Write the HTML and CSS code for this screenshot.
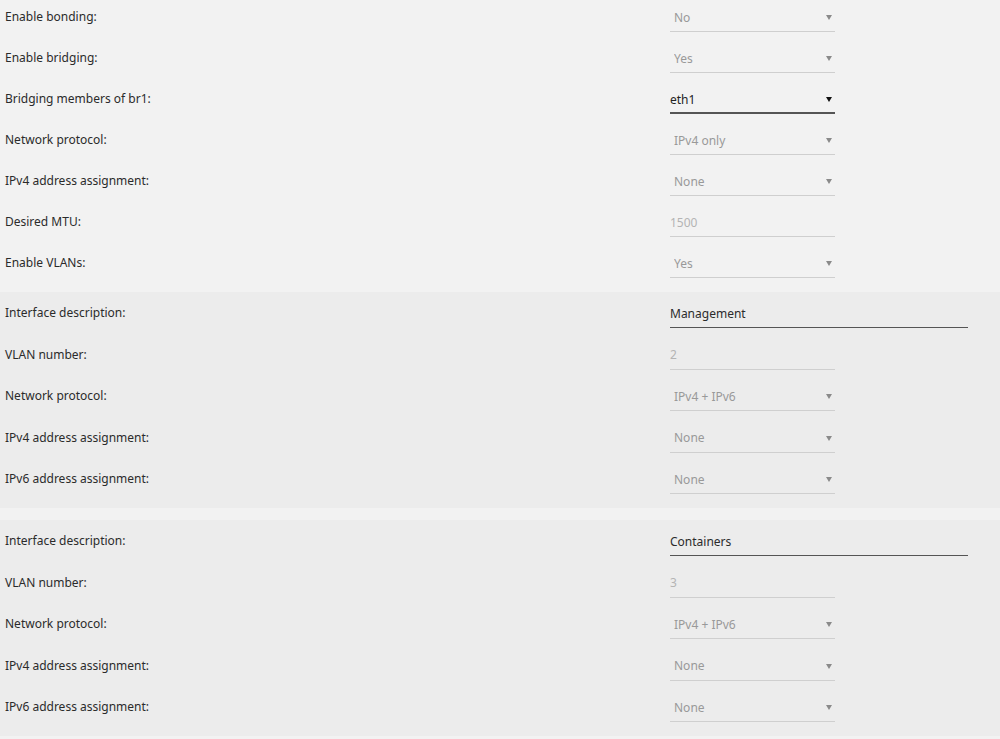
FILE: index.html
```html
<!DOCTYPE html>
<html lang="en">
<head>
    <meta charset="UTF-8">
    <meta name="viewport" content="width=device-width, initial-scale=1.0">
    <title>Interface settings</title>
    <link rel="stylesheet" href="styles.css">
</head>
<body>
    <div class="section main">
        <div class="row">
            <label>Enable bonding:</label>
            <div class="select"><select disabled><option>No</option></select></div>
        </div>
        <div class="row">
            <label>Enable bridging:</label>
            <div class="select"><select disabled><option>Yes</option></select></div>
        </div>
        <div class="row">
            <label>Bridging members of br1:</label>
            <div class="select active"><select><option>eth1</option></select></div>
        </div>
        <div class="row">
            <label>Network protocol:</label>
            <div class="select"><select disabled><option>IPv4 only</option></select></div>
        </div>
        <div class="row">
            <label>IPv4 address assignment:</label>
            <div class="select"><select disabled><option>None</option></select></div>
        </div>
        <div class="row">
            <label>Desired MTU:</label>
            <div class="field"><input type="text" value="1500" disabled></div>
        </div>
        <div class="row">
            <label>Enable VLANs:</label>
            <div class="select"><select disabled><option>Yes</option></select></div>
        </div>
    </div>

    <div class="section vlan">
        <div class="row">
            <label>Interface description:</label>
            <div class="field wide"><input type="text" value="Management"></div>
        </div>
        <div class="row">
            <label>VLAN number:</label>
            <div class="field"><input type="text" value="2" disabled></div>
        </div>
        <div class="row">
            <label>Network protocol:</label>
            <div class="select"><select disabled><option>IPv4 + IPv6</option></select></div>
        </div>
        <div class="row">
            <label>IPv4 address assignment:</label>
            <div class="select"><select disabled><option>None</option></select></div>
        </div>
        <div class="row">
            <label>IPv6 address assignment:</label>
            <div class="select"><select disabled><option>None</option></select></div>
        </div>
    </div>

    <div class="section vlan">
        <div class="row">
            <label>Interface description:</label>
            <div class="field wide"><input type="text" value="Containers"></div>
        </div>
        <div class="row">
            <label>VLAN number:</label>
            <div class="field"><input type="text" value="3" disabled></div>
        </div>
        <div class="row">
            <label>Network protocol:</label>
            <div class="select"><select disabled><option>IPv4 + IPv6</option></select></div>
        </div>
        <div class="row">
            <label>IPv4 address assignment:</label>
            <div class="select"><select disabled><option>None</option></select></div>
        </div>
        <div class="row">
            <label>IPv6 address assignment:</label>
            <div class="select"><select disabled><option>None</option></select></div>
        </div>
    </div>
</body>
</html>
```

FILE: styles.css
```css
body {
    font-family: 'Noto Sans', 'Open Sans', sans-serif;
    font-size: 12px;
    margin: 0;
    padding: 0;
    background-color: #f2f2f2;
    color: #2b2b2b;
}

.main {
    padding: 0 0 5px;
}

.main .row {
    height: 41px;
}

.vlan {
    background-color: #ececec;
    padding: 4px 0 4.5px;
    margin-bottom: 12px;
}

.row {
    display: flex;
    height: 41.5px;
    padding-top: 3px;
    box-sizing: border-box;
}

label {
    width: 665px;
    padding-left: 5px;
    line-height: 28px;
    color: #2b2b2b;
}

.select,
.field {
    position: relative;
    width: 165px;
    height: 29px;
    box-sizing: border-box;
    border-bottom: 1px solid #cfcfcf;
}

.field.wide {
    width: 298px;
    border-bottom: 1px solid #555555;
}

select,
input {
    appearance: none;
    -webkit-appearance: none;
    width: 100%;
    height: 28px;
    margin: 0;
    border: none;
    background: transparent;
    font-family: inherit;
    font-size: 12px;
    outline: none;
}

select {
    padding: 0 0 0 4px;
    color: #999999;
    opacity: 1;
}

input {
    padding: 0;
    color: #2b2b2b;
}

input:disabled {
    color: #b4b4b4;
}

.select::after {
    content: "";
    position: absolute;
    right: 3px;
    top: 12px;
    border-left: 3px solid transparent;
    border-right: 3px solid transparent;
    border-top: 5px solid #8a8a8a;
}

.select.active {
    border-bottom: 2px solid #555555;
}

.select.active select {
    color: #222222;
    padding-left: 0;
}

.select.active::after {
    border-top-color: #111111;
}
```
